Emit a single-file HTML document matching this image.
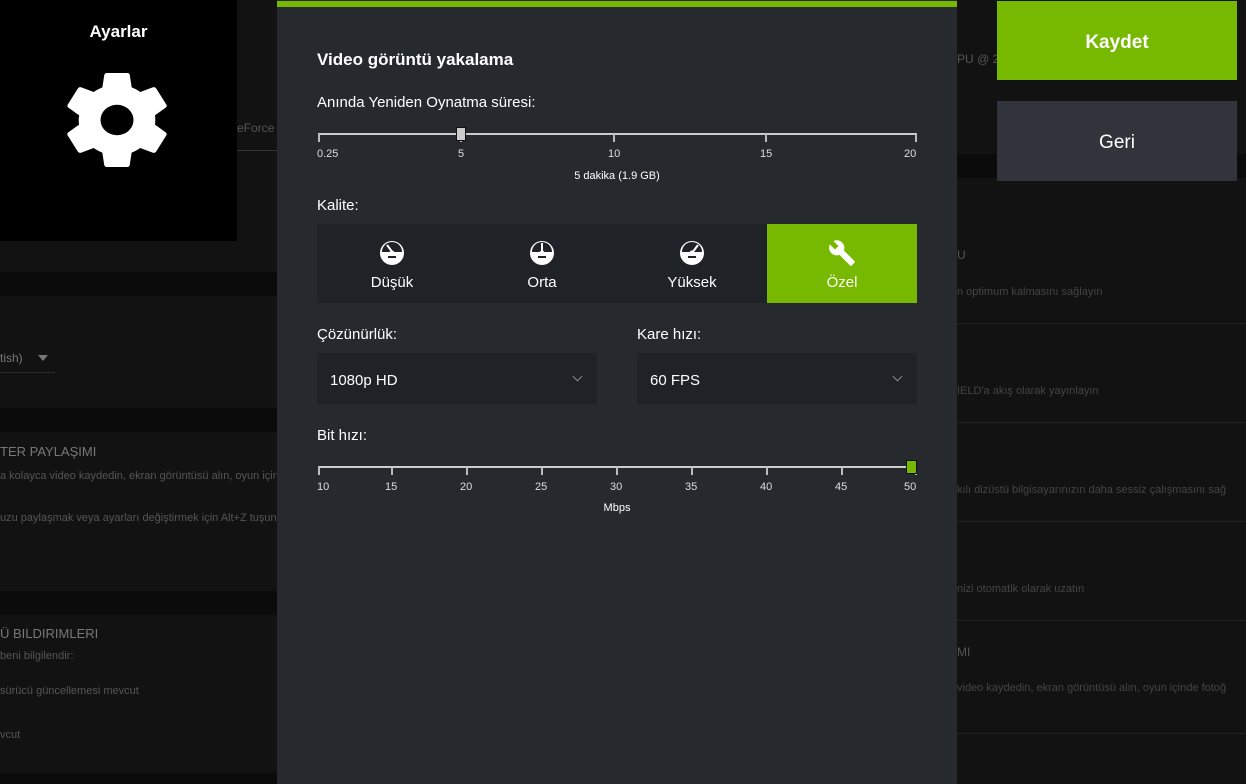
<!DOCTYPE html>
<html><head><meta charset="utf-8"><style>
*{margin:0;padding:0;box-sizing:border-box}
body{width:1246px;height:784px;background:#121212;position:relative;overflow:hidden;font-family:"Liberation Sans",sans-serif;color:#fff}
.a{position:absolute}
.band{position:absolute;left:0;width:277px;background:#0b0b0b}
.dim{position:absolute;color:#555;font-size:11px;white-space:nowrap}
.dimr{position:absolute;color:#444;font-size:11px;white-space:nowrap}
.line{position:absolute;height:1px;background:#222}
.lbl{font-size:15px;color:#fff}
.tick{position:absolute;width:2px;height:8px;background:#bbb}
.tl{position:absolute;font-size:11px;color:#ddd}
.seg{position:absolute;top:224px;width:150px;height:79px;background:#1f2226;text-align:center;font-size:15px}
.dd{position:absolute;top:353px;width:280px;height:51px;background:#1f2226;font-size:15px;padding:19px 0 0 13px}
.chev{position:absolute;right:16px;top:20px;width:7px;height:7px;border-right:1.5px solid #888;border-bottom:1.5px solid #888;transform:rotate(45deg)}
</style></head><body>
<div class="a" style="left:0;top:0;width:237px;height:241px;background:#000"></div>
<div class="a" style="left:237px;top:150px;width:40px;height:1px;background:#333"></div>
<div class="dim" style="left:237px;top:121px;font-size:12px">eForce E</div>
<div class="a" style="left:0;top:22px;width:237px;text-align:center;font-size:17px;font-weight:bold">Ayarlar</div>
<svg class="a" style="left:67px;top:70px" width="100" height="100" viewBox="2.6 1.8 18.8 20.4" preserveAspectRatio="none"><path fill="#fff" d="M19.14 12.94c.04-.3.06-.61.06-.94 0-.32-.02-.64-.07-.94l2.03-1.58a.49.49 0 0 0 .12-.61l-1.92-3.32a.49.49 0 0 0-.59-.22l-2.39.96c-.5-.38-1.030-.7-1.620-.94l-.36-2.54a.48.48 0 0 0-.48-.41h-3.84c-.24 0-.43.17-.47.41l-.36 2.54c-.59.24-1.13.57-1.62.94l-2.39-.96a.49.49 0 0 0-.59.22L2.74 8.87c-.12.21-.08.47.12.61l2.03 1.58c-.05.3-.09.63-.09.94s.02.64.07.94l-2.03 1.58a.49.49 0 0 0-.12.61l1.92 3.320c.12.22.37.29.59.22l2.39-.96c.5.38 1.03.7 1.62.94l.36 2.54c.05.24.24.41.48.41h3.84c.24 0 .44-.17.47-.41l.36-2.54c.59-.24 1.130-.56 1.62-.94l2.39.96c.22.08.47 0 .59-.22l1.92-3.32c.12-.22.07-.47-.12-.61l-2.01-1.58zM12 15.1A3.1 3.1 0 1 1 12 8.9a3.1 3.1 0 0 1 0 6.2z"/></svg>
<div class="band" style="top:272px;height:24px"></div>
<div class="dim" style="left:0;top:351px;font-size:12px;color:#777">tish)</div>
<div class="a" style="left:38px;top:355px;border:5px solid transparent;border-top:6px solid #777"></div>
<div class="a" style="left:0;top:372px;width:55px;height:1px;background:#2a2a2a"></div>
<div class="band" style="top:408px;height:24px"></div>
<div class="dim" style="left:0;top:444px;font-size:13px;color:#777">TER PAYLAŞIMI</div>
<div class="dim" style="left:0;top:470px">a kolayca video kaydedin, ekran görüntüsü alın, oyun içind</div>
<div class="dim" style="left:0;top:512px">uzu paylaşmak veya ayarları değiştirmek için Alt+Z tuşuna</div>
<div class="band" style="top:591px;height:24px"></div>
<div class="dim" style="left:0;top:626px;font-size:13px;color:#777">Ü BILDIRIMLERI</div>
<div class="dim" style="left:0;top:650px">beni bilgilendir:</div>
<div class="dim" style="left:0;top:685px">sürücü güncellemesi mevcut</div>
<div class="dim" style="left:0;top:729px">vcut</div>
<div class="band" style="top:773px;height:11px"></div>
<div class="a" style="left:957px;top:154px;width:289px;height:24px;background:#0b0b0b"></div>
<div class="dimr" style="left:957px;top:52px;font-size:12px;color:#555">PU @ 2.8</div>
<div class="dimr" style="left:957px;top:248px;font-size:12px;color:#555">U</div>
<div class="dimr" style="left:957px;top:286px">n optimum kalmasını sağlayın</div>
<div class="line" style="left:957px;top:323px;width:289px"></div>
<div class="dimr" style="left:957px;top:385px">IELD'a akış olarak yayınlayın</div>
<div class="line" style="left:957px;top:422px;width:289px"></div>
<div class="dimr" style="left:957px;top:484px">kılı dizüstü bilgisayarınızın daha sessiz çalışmasını sağ</div>
<div class="line" style="left:957px;top:521px;width:289px"></div>
<div class="dimr" style="left:957px;top:583px">nizi otomatik olarak uzatın</div>
<div class="line" style="left:957px;top:620px;width:289px"></div>
<div class="dimr" style="left:957px;top:645px;font-size:12px;color:#555">MI</div>
<div class="dimr" style="left:957px;top:682px">video kaydedin, ekran görüntüsü alın, oyun içinde fotoğ</div>
<div class="line" style="left:957px;top:733px;width:289px"></div>
<div class="a" style="left:997px;top:1px;width:240px;height:79px;background:#76b900;text-align:center;line-height:84px;font-size:19px;font-weight:bold">Kaydet</div>
<div class="a" style="left:997px;top:101px;width:240px;height:80px;background:#31343a;text-align:center;line-height:84px;font-size:19px">Geri</div>
<div class="a" style="left:277px;top:0;width:680px;height:784px;background:#262a2f"></div>
<div class="a" style="left:277px;top:1px;width:680px;height:6px;background:#76b900"></div>
<div class="a" style="left:317px;top:50px;font-size:17px;font-weight:bold">Video görüntü yakalama</div>
<div class="a lbl" style="left:317px;top:94px">Anında Yeniden Oynatma süresi:</div>
<div class="a" style="left:318px;top:133px;width:599px;height:2px;background:#ccc"></div>
<div class="tick" style="left:318px;top:134px"></div><div class="tick" style="left:460px;top:134px"></div><div class="tick" style="left:613px;top:134px"></div><div class="tick" style="left:765px;top:134px"></div><div class="tick" style="left:915px;top:134px"></div>
<div class="a" style="left:456px;top:127px;width:10px;height:14px;background:#ccc;border:1px solid #111"></div>
<div class="tl" style="left:317px;top:148px">0.25</div><div class="tl" style="left:458px;top:148px">5</div><div class="tl" style="left:608px;top:148px">10</div><div class="tl" style="left:760px;top:148px">15</div><div class="tl" style="left:904px;top:148px">20</div>
<div class="a" style="left:517px;top:170px;width:200px;text-align:center;font-size:11px">5 dakika (1.9 GB)</div>
<div class="a lbl" style="left:317px;top:197px">Kalite:</div>
<div class="seg" style="left:317px"><svg style="margin-top:15px" width="28" height="28" viewBox="0 0 28 28"><circle cx="14" cy="14" r="12" fill="#fff"/><path d="M4 13a10 10 0 0 1 20 0z" fill="#1f2226"/><path d="M9 6l6 8" stroke="#fff" stroke-width="2"/><rect x="10" y="17" width="8" height="2" fill="#1f2226"/><circle cx="14" cy="14" r="2.5" fill="#fff"/></svg><div style="margin-top:3px">Düşük</div></div>
<div class="seg" style="left:467px"><svg style="margin-top:15px" width="28" height="28" viewBox="0 0 28 28"><circle cx="14" cy="14" r="12" fill="#fff"/><path d="M4 13a10 10 0 0 1 20 0z" fill="#1f2226"/><path d="M14 4v10" stroke="#fff" stroke-width="2"/><rect x="10" y="17" width="8" height="2" fill="#1f2226"/><circle cx="14" cy="14" r="2.5" fill="#fff"/></svg><div style="margin-top:3px">Orta</div></div>
<div class="seg" style="left:617px"><svg style="margin-top:15px" width="28" height="28" viewBox="0 0 28 28"><circle cx="14" cy="14" r="12" fill="#fff"/><path d="M4 13a10 10 0 0 1 20 0z" fill="#1f2226"/><path d="M20 6l-6 8" stroke="#fff" stroke-width="2"/><rect x="10" y="17" width="8" height="2" fill="#1f2226"/><circle cx="14" cy="14" r="2.5" fill="#fff"/></svg><div style="margin-top:3px">Yüksek</div></div>
<div class="seg" style="left:767px;background:#76b900"><svg style="margin-top:15px" width="28" height="28" viewBox="0 0 24 24"><path fill="#fff" d="M22.7 19l-9.1-9.1c.9-2.3.4-5-1.5-6.9-2-2-5-2.4-7.4-1.3L9 6 6 9 1.6 4.7C.4 7.1.9 10.1 2.9 12.1c1.9 1.9 4.6 2.4 6.9 1.5l9.1 9.1c.4.4 1 .4 1.4 0l2.3-2.3c.5-.4.5-1.1.1-1.4z"/></svg><div style="margin-top:3px">Özel</div></div>
<div class="a lbl" style="left:317px;top:326px">Çözünürlük:</div>
<div class="a lbl" style="left:637px;top:326px">Kare hızı:</div>
<div class="dd" style="left:317px">1080p HD<div class="chev"></div></div>
<div class="dd" style="left:637px">60 FPS<div class="chev"></div></div>
<div class="a lbl" style="left:317px;top:427px">Bit hızı:</div>
<div class="a" style="left:318px;top:466px;width:599px;height:2px;background:#ccc"></div>
<div class="tick" style="left:318px;top:467px"></div><div class="tick" style="left:391px;top:467px"></div><div class="tick" style="left:466px;top:467px"></div><div class="tick" style="left:541px;top:467px"></div><div class="tick" style="left:616px;top:467px"></div><div class="tick" style="left:691px;top:467px"></div><div class="tick" style="left:766px;top:467px"></div><div class="tick" style="left:841px;top:467px"></div><div class="tick" style="left:915px;top:467px"></div>
<div class="a" style="left:906px;top:460px;width:11px;height:14px;background:#76b900;border:1px solid #111"></div>
<div class="tl" style="left:317px;top:481px">10</div><div class="tl" style="left:385px;top:481px">15</div><div class="tl" style="left:460px;top:481px">20</div><div class="tl" style="left:535px;top:481px">25</div><div class="tl" style="left:610px;top:481px">30</div><div class="tl" style="left:685px;top:481px">35</div><div class="tl" style="left:760px;top:481px">40</div><div class="tl" style="left:835px;top:481px">45</div><div class="tl" style="left:904px;top:481px">50</div>
<div class="a" style="left:567px;top:502px;width:100px;text-align:center;font-size:11px">Mbps</div>
</body></html>
